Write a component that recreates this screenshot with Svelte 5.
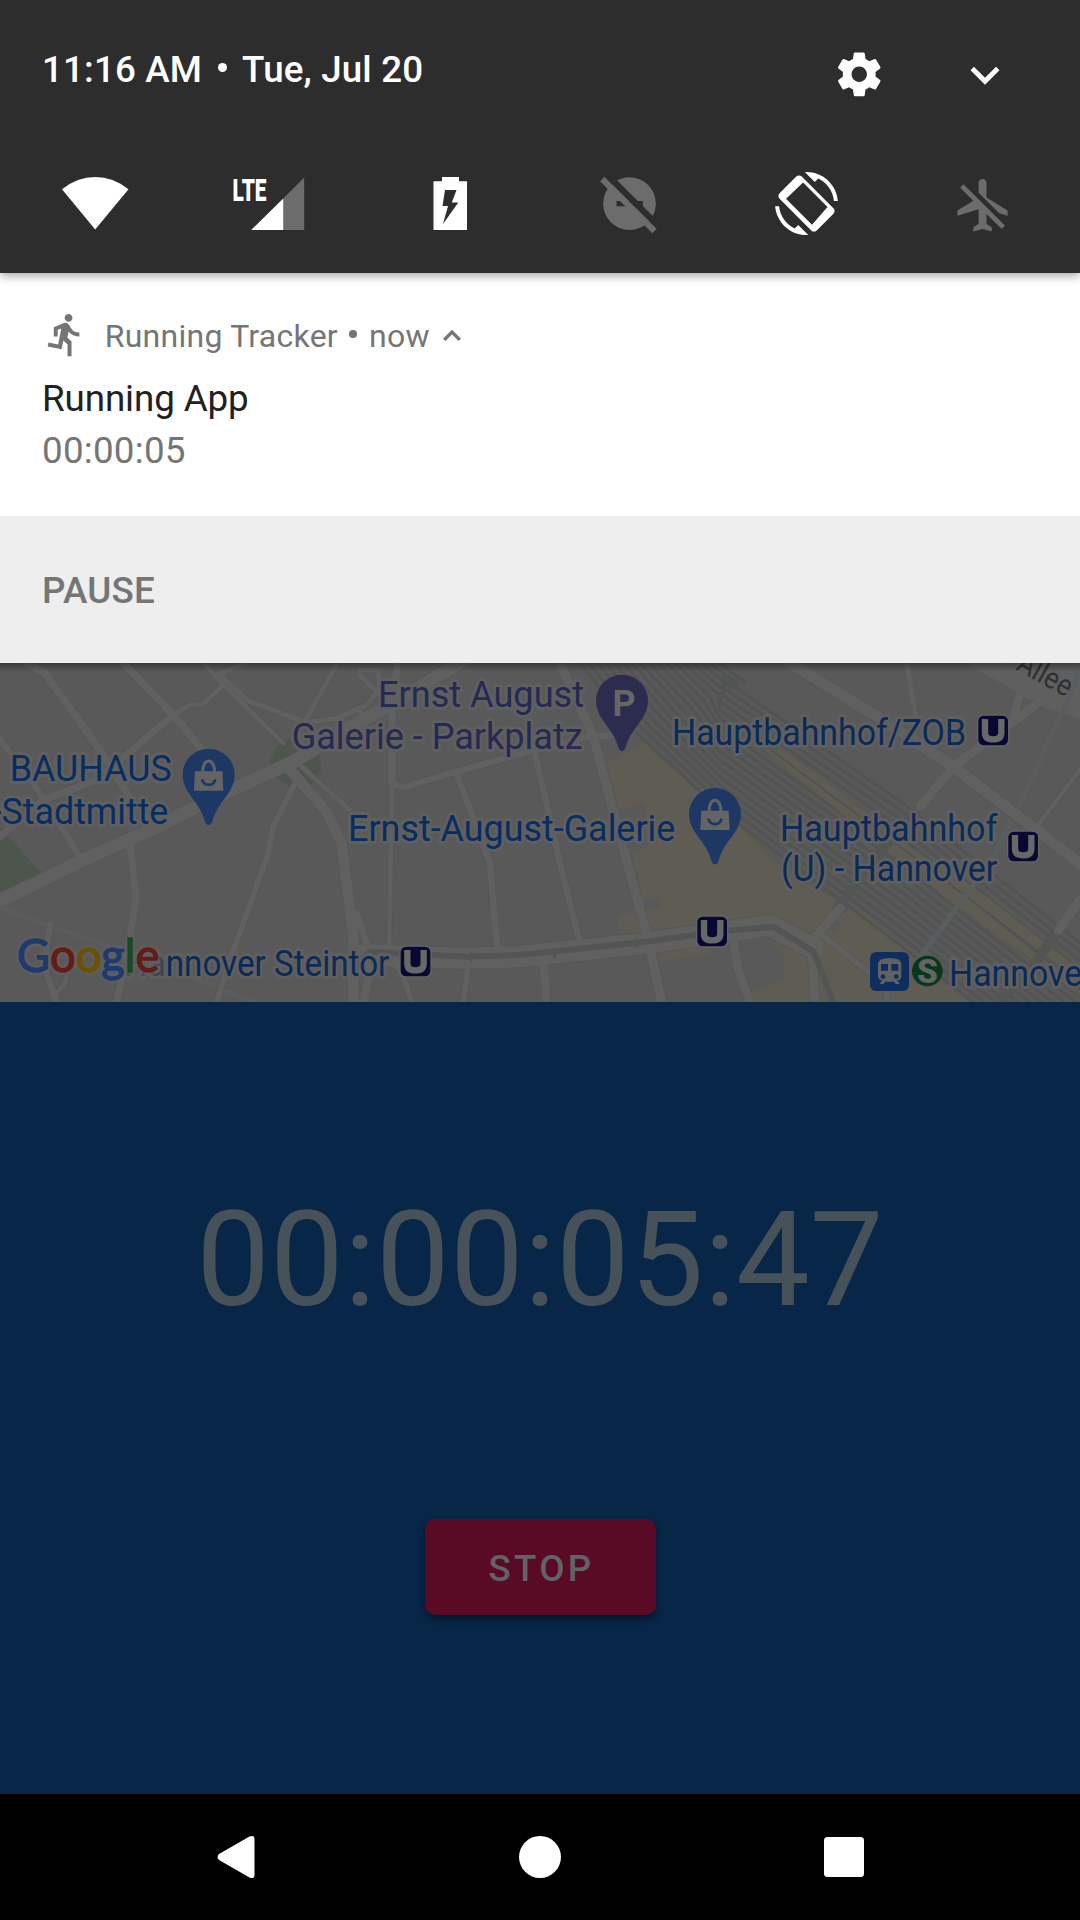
<script>
  const yard = Array.from({ length: 17 }, (_, i) =>
    `${1740 + i * 26},39 ${1900 + i * 21},${240 - i * 9} 2160,${480 - i * 25} 2700,${885 - i * 27} 3240,${1310 - i * 27}`
  );
  const streets = [
    [24, '80,39 135,70 300,300 400,460'],
    [24, '370,39 520,195 640,340'],
    [22, '520,195 290,390 130,450 0,560'],
    [14, '520,195 575,162 605,165 670,105'],
    [14, '610,39 670,105 850,280'],
    [14, '655,72 740,39'],
    [16, '660,75 740,150 920,218 1010,205 1100,165'],
    [14, '1012,39 915,215'],
    [20, '0,268 100,400 240,620'],
    [22, '390,580 408,740 385,900 350,1056'],
    [18, '885,400 820,530 805,610 690,930 650,1056'],
    [32, '870,360 980,485 1025,580 1060,860 1060,1056'],
    [14, '905,350 1050,480'],
    [20, '150,825 132,950 170,1056'],
    [14, '200,980 192,1005 165,1035'],
    [22, '1192,39 1176,190 1176,400'],
    [14, '1176,400 1168,880'],
    [14, '1080,60 1135,60 1138,120 1080,185'],
    [14, '1080,75 1135,130'],
    [20, '1176,400 1210,412 1370,365 1600,300 1760,262 1850,255'],
    [28, '1680,39 1780,260 1860,560 1940,850 1985,1056'],
    [20, '1370,370 1470,640 1492,900'],
    [20, '1605,310 1680,640 1740,880'],
    [20, '1070,790 1100,880'],
    [24, '1630,930 1640,1056'],
    [16, '1405,940 1390,1056'],
    [26, '1120,920 1110,960 1090,1056'],
    [16, '1170,920 1210,980 1235,1056'],
    [34, '2370,39 2640,205 2860,350 3240,640'],
    [16, '2720,39 2750,220'],
    [28, '2860,350 2760,470'],
    [28, '2860,350 3120,155'],
    [26, '3060,130 3040,200'],
    [14, '3240,360 3110,530'],
    [28, '3240,750 3175,840'],
    [28, '2520,775 2430,880'],
    [18, '2460,850 2650,1000 2665,1056'],
    [26, '2195,850 2215,960 2250,1056'],
    [28, '2435,870 2445,1056']
  ];
  const badges = [[2933, 195], [3023, 543], [1200, 888], [2090, 798]];
  const pins = [
    { x: 626, y: 372, kind: 'shop' },
    { x: 1866, y: 150, kind: 'parking' },
    { x: 2145, y: 490, kind: 'shop' }
  ];
  const labels = [
    { t: 'BAUHAUS', x: 29, y: 392, w: 486, s: 112, c: 'blue' },
    { t: '-Stadtmitte', x: -25, y: 522, w: 530, s: 112, c: 'blue' },
    { t: 'Ernst August', x: 1134, y: 170, w: 618, s: 112, c: 'purple' },
    { t: 'Galerie - Parkplatz', x: 875, y: 298, w: 873, s: 112, c: 'purple' },
    { t: 'Ernst-August-Galerie', x: 1044, y: 574, w: 982, s: 112, c: 'blue' },
    { t: 'Hauptbahnhof/ZOB', x: 2016, y: 285, w: 882, s: 108, c: 'transit' },
    { t: 'Hauptbahnhof', x: 2340, y: 573, w: 652, s: 108, c: 'transit' },
    { t: '(U) - Hannover', x: 2343, y: 692, w: 649, s: 108, c: 'transit' },
    { faint: 'Ha', t: 'nnover Steintor', x: 372, y: 977, w: 796, s: 108, c: 'transit' },
    { t: 'Hannover', x: 2847, y: 1007, w: 434, s: 108, c: 'transit' }
  ];
</script>

<main class="screen">
  <header class="shade">
    <div class="bar">
      <div class="clock"><span>11:16 AM</span><span class="dot"></span><span>Tue, Jul 20</span></div>
      <svg class="gear" viewBox="0 0 24 24"><path d="M19.43 12.98c.04-.32.07-.64.07-.98s-.03-.66-.07-.98l2.11-1.65c.19-.15.24-.42.12-.64l-2-3.46c-.12-.22-.39-.3-.61-.22l-2.49 1c-.52-.4-1.08-.73-1.69-.98l-.38-2.65C14.46 2.18 14.25 2 14 2h-4c-.25 0-.46.18-.49.42l-.38 2.65c-.61.25-1.17.59-1.69.98l-2.49-1c-.23-.09-.49 0-.61.22l-2 3.46c-.13.22-.07.49.12.64l2.11 1.65c-.04.32-.07.65-.07.98s.03.66.07.98l-2.11 1.65c-.19.15-.24.42-.12.64l2 3.46c.12.22.39.3.61.22l2.49-1c.52.4 1.08.73 1.69.98l.38 2.65c.03.24.24.42.49.42h4c.25 0 .46-.18.49-.42l.38-2.65c.61-.25 1.17-.59 1.69-.98l2.49 1c.23.09.49 0 .61-.22l2-3.46c.12-.22.07-.49-.12-.64l-2.11-1.65zM12 15.5c-1.93 0-3.5-1.57-3.5-3.5s1.57-3.5 3.5-3.5 3.5 1.57 3.5 3.5-1.57 3.5-3.5 3.5z" /></svg>
      <svg class="expand" viewBox="0 0 24 24"><path d="M16.59 8.59L12 13.17 7.41 8.59 6 10l6 6 6-6z" /></svg>
    </div>
    <div class="tiles">
      <svg viewBox="53 168 84 72"><path d="M62 189.3Q77 177 95.200 177Q113.500 177 128.500 189.300L95.200 229.500Z" /></svg>
      <svg viewBox="230.5 168 84 72">
        <text class="lte" x="232" y="201" textLength="34" lengthAdjust="spacingAndGlyphs">LTE</text>
        <path class="off" d="M282.500 198.700L303.700 177.500V230H282.500Z" /><path d="M250.700 230L282.700 198.500V230Z" />
      </svg>
      <svg viewBox="408 168 84 72"><path fill-rule="evenodd" d="M442 177h17v4.200h8V230h-33.500v-48.800h8.500ZM445 190l-2.500 16h5.500l-5 18 15.300-21.500h-6.500l4.700-12.500Z" /></svg>
      <svg viewBox="585.5 168 84 72">
        <g transform="translate(590 165) scale(.33333)">
          <circle class="off" cx="117" cy="116" r="79" /><path class="hole" d="M78 108h79v16H78Z" />
          <path class="gap" d="M50 30L205 185" /><path class="slash" d="M35 42L192 198" />
        </g>
      </svg>
      <svg viewBox="763 168 84 72">
        <g transform="translate(775 172) scale(2.625)">
          <path d="M16.480 2.520c3.270 1.550 5.610 4.720 5.970 8.480h1.500C23.440 4.840 18.290 0 12 0l-.66.03 3.810 3.810 1.330-1.320zM7.520 21.480C4.250 19.940 1.910 16.760 1.550 13H.05C.56 19.160 5.710 24 12 24l.66-.03-3.810-3.810-1.330 1.320z" />
          <path fill-rule="evenodd" d="M10.200 1.750c-.6-.6-1.500-.6-2.100 0L1.750 8.100c-.6.6-.6 1.500 0 2.100L13.800 22.250c.6.6 1.500.6 2.100 0l6.350-6.350c.6-.6.6-1.500 0-2.100ZM10.700 4L20 13.300L14.100 20.100L4.200 10.200Z" />
        </g>
      </svg>
      <svg viewBox="940.5 168 84 72"><path class="off" transform="translate(951.7 173.8) scale(2.64 2.625)" d="M13 9V3.500c0-.83-.67-1.500-1.500-1.500S10 2.670 10 3.500v3.680l7.830 7.830L21 16v-2l-8-5zM3 5.270l4.990 4.990L2 14v2l8-2.500V19l-2 1.500V22l3.500-1 3.500 1v-1.500L13 19v-3.730L18.730 21 20 19.730 4.270 4 3 5.270z" /></svg>
    </div>
  </header>

  <section class="note">
    <div class="app">
      <svg class="runner" viewBox="0 0 24 24"><path d="M13.490 5.480c1.100 0 2-.9 2-2s-.9-2-2-2-2 .9-2 2 .9 2 2 2zm-3.600 13.900l1-4.400 2.100 2v6h2v-7.500l-2.100-2 .6-3c1.300 1.500 3.300 2.500 5.500 2.500v-2c-1.900 0-3.500-1-4.300-2.400l-1-1.600c-.4-.6-1-1-1.700-1-.3 0-.5.1-.8.1l-5.200 2.200v4.700h2v-3.400l1.800-.7-1.600 8.100-4.900-1-.4 2 7 1.400z" /></svg>
      <span>Running Tracker</span><span class="dot small"></span><span>now</span>
      <svg class="collapse" viewBox="0 0 18 11"><path d="M1.200 9.800L9 2l7.800 7.800" /></svg>
    </div>
    <h1>Running App</h1>
    <p>00:00:05</p>
  </section>
  <div class="actions"><button class="pause">PAUSE</button></div>

  <svg class="map" viewBox="0 39 3240 1017">
    <defs>
      <linearGradient id="edge" x1="0" y1="0" x2="0" y2="1">
        <stop offset="0" stop-color="#000" stop-opacity=".35" /><stop offset="1" stop-color="#000" stop-opacity="0" />
      </linearGradient>
    </defs>
    <rect y="39" width="3240" height="1017" fill="#595959" />
    <g fill="#4d564d">
      <path d="M0 530L125 670L0 728Z" />
      <path d="M810 330L830 290L870 265L962 320V370L930 405L870 412L815 370Z" />
    </g>
    <g fill="#5f5c53">
      <path d="M1820 340L1940 275L1960 310L2110 420L2160 500L2220 530L2330 640L2515 755L2430 860L2310 800L2160 810L1950 845L1895 605L1945 590L1935 460L1855 480Z" />
      <path d="M2560 765L2720 890L2910 1056H2255V1025L2350 990L2355 920L2320 880L2340 865L2430 880L2470 840Z" />
      <path d="M1850 795L1915 785L1925 848L1860 855ZM1965 895L2130 880V912L1970 935Z" />
      <path d="M3180 39H3240V95L3170 50Z" />
    </g>
    <path fill="#595959" d="M1930 752L1975 740L1983 770L1935 780ZM2490 830L2515 805L2520 825L2500 855Z" />
    <g class="rails">
      {#each yard as line}<polyline points={line} />{/each}
    </g>
    <path fill="#5f5c53" d="M2280 290L2350 300L2610 495L2730 590L2960 740L3240 960V1040L3140 960L2860 760L2560 520Z" />
    <g class="rails thin">
      <polyline points="2300,290 2560,485 2900,740 3240,1000" /><polyline points="2900,740 3150,940 3240,1020" />
    </g>
    <path fill="#5f5f5f" d="M2900 39H3240V208L3115 165Z" />
    <g class="blueway">
      <polyline points="0,740 0,770 150,830 400,910 770,1060" />
      <polyline points="3240,60 3190,180 3060,460 2990,600 2920,705 2660,1056" />
    </g>
    <g class="under">
      <polyline points="2760,470 2610,640 2510,780" /><polyline points="3175,840 3090,960 3000,1056" />
    </g>
    <g class="edges">
      {#each streets as [w, p]}<polyline points={p} stroke-width={w + 4} />{/each}
      <polyline points="-20,762 250,630 440,545 640,445 880,335 1080,215 1190,155 1390,30" stroke-width="44" />
      <polyline points="1090,915 1400,925 1560,920 1930,880 2180,845 2310,825 2440,895" stroke-width="68" />
    </g>
    <g class="roads">
      {#each streets as [w, p]}<polyline points={p} stroke-width={w} />{/each}
      <polyline points="-20,762 250,630 440,545 640,445 880,335 1080,215 1190,155 1390,30" stroke-width="40" />
      <polyline points="1090,915 1400,925 1560,920 1930,880 2180,845 2310,825 2440,895" stroke-width="64" />
    </g>
    <g class="tram">
      <polyline points="1060,950 1110,905 1400,920 1560,915 1930,876 2180,842 2320,830 2440,905 2500,1056" />
      <path d="M1414 905v32M1664 895v32M1910 862v32" />
    </g>

    <text class="street" text-anchor="end" transform="translate(3198 142) rotate(29)" font-size="90" textLength="222" lengthAdjust="spacingAndGlyphs">r Allee</text>
    {#each labels as l}
      <text class="label {l.c}" x={l.x} y={l.y} font-size={l.s} textLength={l.w} lengthAdjust="spacingAndGlyphs">{#if l.faint}<tspan class="faint">{l.faint}</tspan>{/if}{l.t}</text>
    {/each}
    {#each pins as p}
      <g transform="translate({p.x} {p.y})">
        <path class="pin {p.kind}" d="M-78 2A78 78 0 1 1 78 2C78 58 26 82 11 142Q8 153 0 153Q-8 153-11 142C-26 82-78 58-78 2Z" />
        {#if p.kind === 'shop'}
          <path class="bag" d="M-41-8H41L44 50H-44Z" /><path class="handle" d="M-18-6C-18-50 18-50 18-6" /><path class="smile" d="M-20 16C-14 38 14 38 20 16" />
        {:else}
          <text class="p" x="6" y="48" text-anchor="middle">P</text>
        {/if}
      </g>
    {/each}
    {#each badges as [x, y]}
      <g transform="translate({x} {y})">
        <rect class="u" width="93" height="93" rx="18" /><path class="uglyph" d="M22 12V53Q22 73 46 73Q71 73 71 53V12" />
      </g>
    {/each}
    <g transform="translate(2610 906)">
      <rect width="117" height="117" rx="19" fill="#0d2e5e" />
      <path fill="#616161" fill-rule="evenodd" d="M24 36Q24 18 58 18Q94 18 94 36V72Q94 84 82 85L89 96H77L72 89H46L41 96H29L36 85Q24 84 24 72ZM33 36V56H54V36ZM64 36V56H85V36ZM39 67a7 7 0 1 0 .1 0ZM79 67a7 7 0 1 0 .1 0Z" />
    </g>
    <circle cx="2782" cy="963" r="46" fill="#05381c" /><text class="s" x="2782" y="999" text-anchor="middle">S</text>
    <text class="google" x="51" y="965" textLength="427" lengthAdjust="spacingAndGlyphs"><tspan class="g-blue">G</tspan><tspan class="g-red">o</tspan><tspan class="g-yellow">o</tspan><tspan class="g-blue">g</tspan><tspan class="g-green">l</tspan><tspan class="g-red">e</tspan></text>
    <rect y="39" width="3240" height="26" fill="url(#edge)" />
  </svg>

  <section class="timer">
    <div class="time">00:00:05:47</div>
    <button class="stop">STOP</button>
  </section>

  <nav class="nav">
    <svg viewBox="0 0 48 48"><path d="M7 21L37.500 3.500Q42.500 1.500 42.500 6V42Q42.500 46.500 37.500 44.500L7 27Q4 24 7 21Z" /></svg>
    <svg viewBox="0 0 48 48"><circle cx="24" cy="24" r="21" /></svg>
    <svg viewBox="0 0 48 48"><rect x="4" y="4" width="40" height="40" rx="3.500" /></svg>
  </nav>
</main>

<style>
  :global(body) { margin: 0; background: #000; }
  .screen { width: 1080px; height: 1920px; display: flex; flex-direction: column; overflow: hidden; font-family: Roboto, "Liberation Sans", sans-serif; }
  svg { display: block; flex: none; }
  button { border: 0; font: inherit; }
  .shade { position: relative; height: 273px; box-sizing: border-box; background: #2d2d2d; box-shadow: 0 3px 9px rgba(0, 0, 0, .35); fill: #fff; color: #fff; }
  .bar { display: flex; align-items: flex-start; height: 168px; box-sizing: border-box; padding: 47px 66px 0 42px; }
  .clock { flex: 1; display: flex; align-items: center; height: 45px; font-size: 36.750px; font-weight: 500; letter-spacing: .15px; }
  .dot { width: 9px; height: 9px; border-radius: 50%; background: currentColor; margin: 0 15.500px; position: relative; top: -2px; }
  .gear { width: 52.500px; height: 52.500px; margin-top: .8px; }
  .expand { width: 58px; height: 58px; margin: -1px 0 0 71px; }
  .tiles { display: grid; grid-template-columns: repeat(6, 177.500px); justify-items: center; margin-left: 6.250px; }
  .tiles svg { width: 84px; height: 72px; }
  .off { fill: #6c6c6c; }
  .hole { fill: #2d2d2d; }
  .gap { stroke: #2d2d2d; stroke-width: 20; }
  .slash { stroke: #6c6c6c; stroke-width: 18; }
  .lte { font: 900 32px Roboto, sans-serif; }

  .note { height: 243px; box-sizing: border-box; padding: 38px 42px 0; background: #fff; color: #757575; }
  .app { display: flex; align-items: center; height: 50px; font-size: 32px; line-height: 50px; letter-spacing: .25px; }
  .runner { width: 47.250px; height: 47.250px; margin-right: 15.500px; fill: #757575; position: relative; top: -1px; }
  .small { width: 7.500px; height: 7.500px; margin: 0 12px 0 11.500px; }
  .collapse { width: 18px; height: 11px; margin-left: 13.500px; fill: none; stroke: #757575; stroke-width: 3.300; position: relative; top: -1px; }
  h1, p { margin: 0; font-size: 36.750px; font-weight: 400; line-height: 51px; }
  h1 { margin-top: 12px; color: #212121; letter-spacing: -.1px; }
  p { margin-top: 1px; letter-spacing: .25px; }
  .actions { height: 147px; display: flex; align-items: center; padding-left: 42px; background: #eee; }
  .pause { padding: 1px 0 0; background: none; color: #757575; font-size: 36.750px; font-weight: 500; letter-spacing: .25px; }

  .map { width: 1080px; height: 339px; }
  .map polyline { fill: none; stroke-linejoin: round; }
  .rails { stroke: #525454; stroke-width: 9; }
  .thin { stroke-width: 6; }
  .blueway { stroke: #5a5d60; stroke-width: 16; }
  .under { stroke: #535454; stroke-width: 28; }
  .edges { stroke: #555; }
  .roads { stroke: #606060; stroke-linecap: round; }
  .tram { fill: none; stroke: #535555; stroke-width: 18; }
  .tram path { stroke-width: 7; }
  .label { paint-order: stroke; stroke: #5f5f5f; stroke-width: 18; stroke-linejoin: round; }
  .blue { fill: #082d61; }
  .purple { fill: #262a52; }
  .transit { fill: #0a2a58; }
  .faint { fill: #3a4655; }
  .street { fill: #2f3133; stroke: #5f5f5f; stroke-width: 10; paint-order: stroke; }
  .shop { fill: #1e3866; }
  .parking { fill: #2b2c50; }
  .bag { fill: #646464; }
  .handle { fill: none; stroke: #646464; stroke-width: 9; }
  .smile { fill: none; stroke: #1e3866; stroke-width: 8; }
  .p { fill: #666; font-size: 108px; font-weight: 700; }
  .u { fill: #080833; stroke: #646464; stroke-width: 4; }
  .uglyph { fill: none; stroke: #686868; stroke-width: 19; }
  .s { fill: #646464; font-size: 100px; font-weight: 900; }
  .google { font-family: Lato, sans-serif; font-size: 140px; font-weight: 400; stroke-width: 4; filter: drop-shadow(0 0 6px #606060) drop-shadow(0 0 4px #606060); }
  .g-blue { fill: #1f3a70; stroke: #1f3a70; }
  .g-red { fill: #651b17; stroke: #651b17; }
  .g-yellow { fill: #6b5105; stroke: #6b5105; }
  .g-green { fill: #164a25; stroke: #164a25; }

  .timer { height: 792px; box-sizing: border-box; padding-top: 178px; display: flex; flex-direction: column; align-items: center; background: #082648; }
  .time { font-size: 131.250px; line-height: 160px; color: #47515a; letter-spacing: .2px; }
  .stop { margin-top: 179px; width: 231px; height: 96px; padding: 2px 0 0 3px; border-radius: 10.500px; background: #5a0a24; color: #606468; font-size: 36.750px; font-weight: 500; letter-spacing: 3.280px; box-shadow: 0 4px 7px rgba(0, 0, 0, .45); }
  .nav { flex: 1; display: flex; align-items: center; justify-content: space-between; padding: 0 212px; background: #000; fill: #fff; }
  .nav svg { width: 48px; height: 48px; }
</style>
